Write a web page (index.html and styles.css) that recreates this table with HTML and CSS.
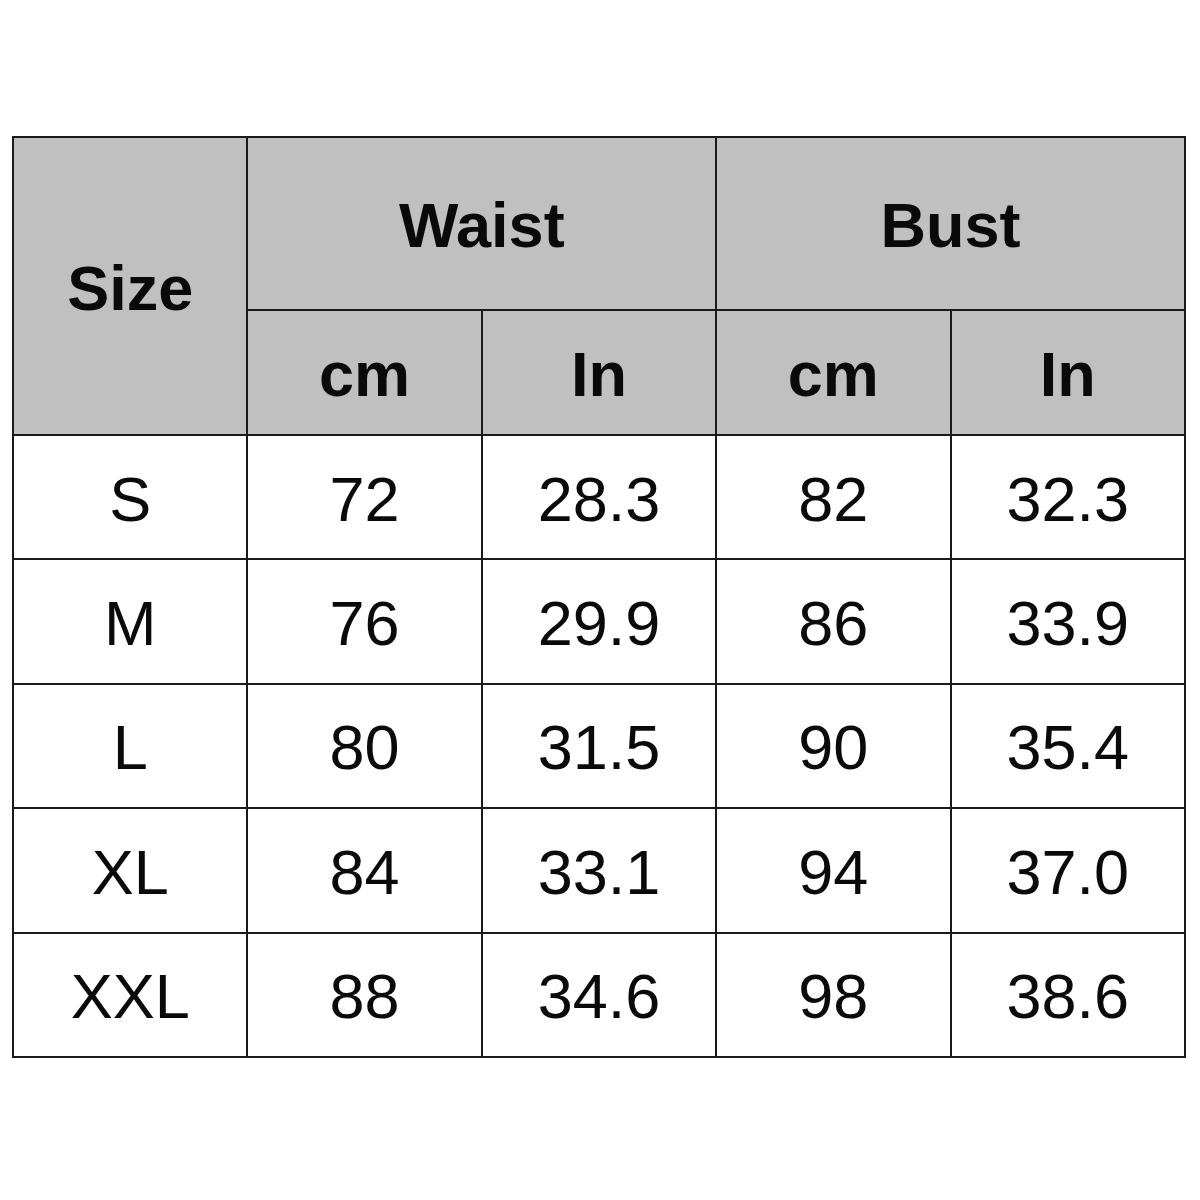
FILE: index.html
```html
<!DOCTYPE html>
<html>
<head>
<meta charset="utf-8">
<link rel="stylesheet" href="styles.css">
</head>
<body>
<table class="size-table">
  <colgroup>
    <col class="c"><col class="c"><col class="c"><col class="c"><col class="c">
  </colgroup>
  <thead>
    <tr class="h1">
      <th rowspan="2" class="head">Size</th>
      <th colspan="2" class="head">Waist</th>
      <th colspan="2" class="head">Bust</th>
    </tr>
    <tr class="h2">
      <th class="head">cm</th>
      <th class="head">In</th>
      <th class="head">cm</th>
      <th class="head">In</th>
    </tr>
  </thead>
  <tbody>
    <tr><td>S</td><td>72</td><td>28.3</td><td>82</td><td>32.3</td></tr>
    <tr><td>M</td><td>76</td><td>29.9</td><td>86</td><td>33.9</td></tr>
    <tr><td>L</td><td>80</td><td>31.5</td><td>90</td><td>35.4</td></tr>
    <tr><td>XL</td><td>84</td><td>33.1</td><td>94</td><td>37.0</td></tr>
    <tr><td>XXL</td><td>88</td><td>34.6</td><td>98</td><td>38.6</td></tr>
  </tbody>
</table>
</body>
</html>
```
FILE: styles.css
```css
html, body {
  margin: 0;
  padding: 0;
  background: #ffffff;
}
body {
  padding: 136px 0 0 12px;
  font-family: "Liberation Sans", Arial, sans-serif;
  color: #000;
}
.size-table {
  border-collapse: collapse;
  table-layout: fixed;
  width: 1174px;
}
.size-table .c {
  width: 20%;
}
.size-table th,
.size-table td {
  border: 2px solid #1a1a1a;
  text-align: center;
  vertical-align: middle;
  padding: 4px 0 0 0;
  font-size: 63px;
  line-height: 1;
}
.size-table th {
  background: #c0c0c0;
  font-weight: bold;
  color: #0a0a0a;
}
.size-table .h1 {
  height: 173px;
}
.size-table .h2 {
  height: 125px;
}
.size-table tbody tr {
  height: 124.4px;
}
.size-table td {
  font-weight: normal;
  color: #0a0a0a;
}
```
